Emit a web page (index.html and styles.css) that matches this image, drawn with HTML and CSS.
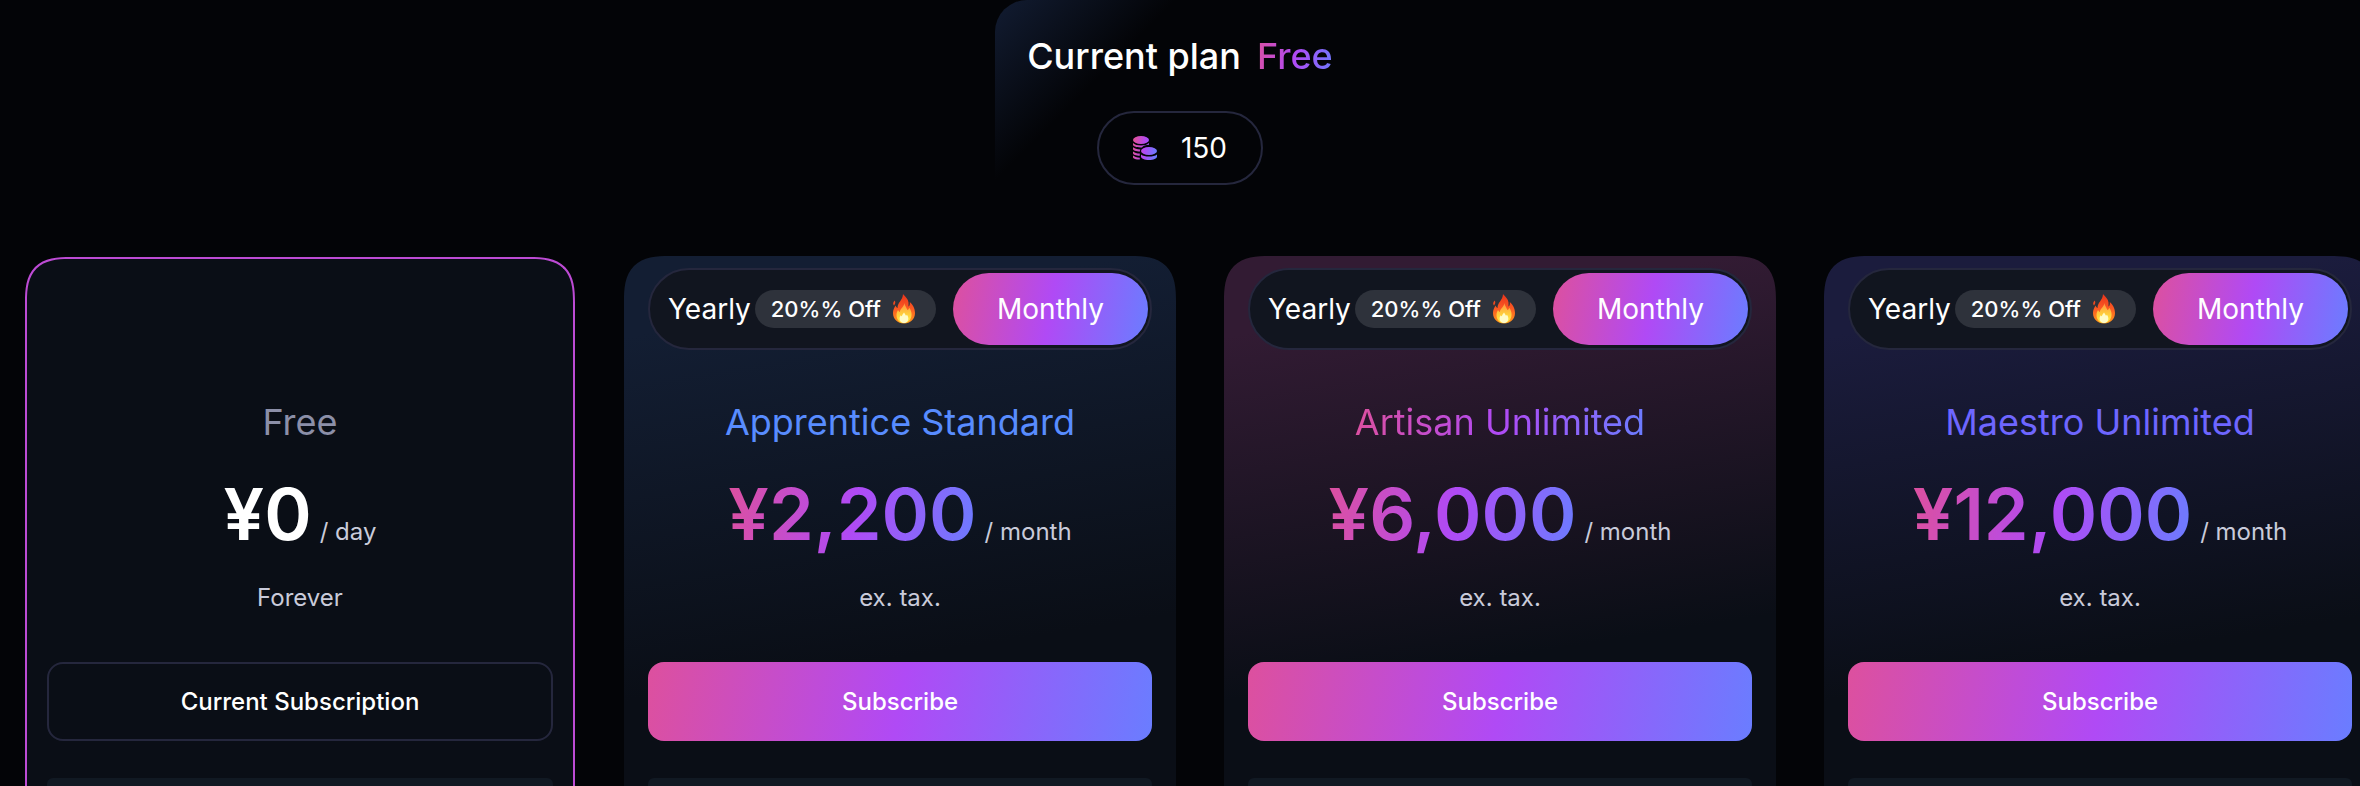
FILE: index.html
```html
<!DOCTYPE html>
<html lang="en">
<head>
<meta charset="utf-8">
<meta name="viewport" content="width=device-width, initial-scale=1">
<title>Plans</title>
<link rel="stylesheet" href="styles.css">
</head>
<body>
<svg class="defs" aria-hidden="true">
  <defs>
    <linearGradient id="brand" gradientUnits="userSpaceOnUse" x1="0" y1="10" x2="24" y2="14">
      <stop offset="0" stop-color="#e0509b"/><stop offset=".5" stop-color="#b04af5"/><stop offset="1" stop-color="#6a7dff"/>
    </linearGradient>
    <linearGradient id="flame-outer" x1="0" y1="0" x2="0" y2="1">
      <stop offset="0" stop-color="#e8331c"/><stop offset=".5" stop-color="#fb5a22"/><stop offset="1" stop-color="#ff9a1f"/>
    </linearGradient>
    <linearGradient id="flame-inner" x1="0" y1="0" x2="0" y2="1">
      <stop offset="0" stop-color="#ff9440"/><stop offset=".5" stop-color="#ffc83c"/><stop offset="1" stop-color="#fff23e"/>
    </linearGradient>
    <symbol id="flame" viewBox="0 0 24 30">
      <path fill="url(#flame-outer)" d="M11 0c2 2.400 5 4.500 5.500 8.500.2 1.600-.1 3 .1 4 .9-.6 1.400-2 1.200-4.500 2.700 2.300 5.200 6.300 5.200 11 0 6.300-4.700 10.500-11 10.500S1 25.300 1 19c0-3.300 1.400-5.700 2.600-7.500.5 1.500 1.200 2.300 2 2.500C5.200 8.500 10.800 6.500 11 0z"/>
      <path fill="#f04a20" d="M2.800 6.500C3.600 8 3.500 9.500 2 11.500.6 10 1 8 2.800 6.500z"/>
      <path fill="url(#flame-inner)" d="M12.500 9c.2 3 2.300 4.800 2.900 7 .9-.3 1.600-1.200 1.800-2.300 1.500 2 2.400 4.300 2.400 6.600 0 5-3.200 8.700-7.600 8.700s-7.500-3.400-7.500-8c0-2 .7-3.600 1.600-5 .4 1.200 1 1.800 1.800 2C8 14.500 12 13 12.500 9z"/>
      <path fill="#fffbc8" d="M12 18.500c1 1.600 1.400 2.300 2 3.200.5-.2.800-.6 1-1 .9 1.300 1.400 2.500 1.400 3.800 0 2.700-1.900 4.500-4.400 4.500s-4.400-1.800-4.400-4.300c0-1.500.5-2.500 1.200-3.400.3.600.7 1 1.100 1 .2-1.500 1.300-2.500 2.100-3.800z"/>
    </symbol>
  </defs>
</svg>

<main class="page">
  <header class="current">
    <h1 class="current-title">Current plan <span class="brand-text">Free</span></h1>
    <div class="credits">
      <svg class="coins" viewBox="0 0 24 24" fill="url(#brand)" aria-hidden="true">
        <ellipse cx="8" cy="4" rx="8" ry="4"/>
        <path d="M0 7c1.500 1.700 4.500 2.500 8 2.500S14.500 8.700 16 7v1.800c-3 .1-5.600.9-7.200 2.600C3.500 11.600 0 10.400 0 8.800z"/>
        <path d="M0 11.200c1.400 1.300 4 2 7.300 2.200-.3.700-.4 1.500-.3 2.200C3 15.400 0 14.400 0 13zM0 15.400c1.400 1.300 4 2 6.800 2.200v2.200C3 19.600 0 18.600 0 17.200zM0 19.600c1.400 1.300 4 2 6.800 2.200V23.600C3 23.400 0 22.600 0 21.200z"/>
        <ellipse cx="16" cy="15" rx="8" ry="4"/>
        <path d="M8 18.500c1.800 1.400 4.700 2 8 2s6.200-.6 8-2v1.900c0 2-3.600 3.600-8 3.600s-8-1.600-8-3.600z"/>
      </svg>
      <span>150</span>
    </div>
  </header>

  <section class="plans" aria-label="Plans">
    <article class="plan plan-free">
      <h2 class="plan-name">Free</h2>
      <p class="price"><strong class="amount">¥0</strong> <span class="period">/ day</span></p>
      <p class="note">Forever</p>
      <button class="action action-current" type="button">Current Subscription</button>
      <div class="features"></div>
    </article>

    <article class="plan plan-apprentice">
      <div class="cycle" role="group" aria-label="Billing cycle">
        <button class="cycle-yearly" type="button" aria-pressed="false">Yearly <span class="discount">20%% Off <svg class="flame" aria-hidden="true"><use href="#flame"/></svg></span></button>
        <button class="cycle-monthly" type="button" aria-pressed="true">Monthly</button>
      </div>
      <h2 class="plan-name">Apprentice Standard</h2>
      <p class="price"><strong class="amount brand-text">¥2,200</strong> <span class="period">/ month</span></p>
      <p class="note">ex. tax.</p>
      <button class="action" type="button">Subscribe</button>
      <div class="features"></div>
    </article>

    <article class="plan plan-artisan">
      <div class="cycle" role="group" aria-label="Billing cycle">
        <button class="cycle-yearly" type="button" aria-pressed="false">Yearly <span class="discount">20%% Off <svg class="flame" aria-hidden="true"><use href="#flame"/></svg></span></button>
        <button class="cycle-monthly" type="button" aria-pressed="true">Monthly</button>
      </div>
      <h2 class="plan-name brand-text">Artisan Unlimited</h2>
      <p class="price"><strong class="amount brand-text">¥6,000</strong> <span class="period">/ month</span></p>
      <p class="note">ex. tax.</p>
      <button class="action" type="button">Subscribe</button>
      <div class="features"></div>
    </article>

    <article class="plan plan-maestro">
      <div class="cycle" role="group" aria-label="Billing cycle">
        <button class="cycle-yearly" type="button" aria-pressed="false">Yearly <span class="discount">20%% Off <svg class="flame" aria-hidden="true"><use href="#flame"/></svg></span></button>
        <button class="cycle-monthly" type="button" aria-pressed="true">Monthly</button>
      </div>
      <h2 class="plan-name">Maestro Unlimited</h2>
      <p class="price"><strong class="amount brand-text">¥12,000</strong> <span class="period">/ month</span></p>
      <p class="note">ex. tax.</p>
      <button class="action" type="button">Subscribe</button>
      <div class="features"></div>
    </article>
  </section>
</main>
</body>
</html>
```
FILE: styles.css
```css
:root {
  --brand: linear-gradient(100deg, #dd509e 0%, #b04af5 50%, #6a7dff 100%);
  --surface: #0a0e16;
  --line: #25273d;
}

* { box-sizing: border-box; }

body {
  margin: 0;
  background: #030407;
  color: #fff;
  font: 400 24px/36px Inter, "Noto Sans", sans-serif;
}

h1, h2, p { margin: 0; }

button {
  margin: 0;
  padding: 0;
  border: 0;
  background: none;
  color: inherit;
  font: inherit;
  cursor: pointer;
}

.defs { position: absolute; width: 0; height: 0; }

.page {
  display: flex;
  flex-direction: column;
  height: 100vh;
  min-height: 786px;
  overflow: hidden;
}

.brand-text {
  background: var(--brand);
  background-clip: text;
  -webkit-background-clip: text;
  color: transparent;
}

.current {
  display: flex;
  flex-direction: column;
  align-items: center;
  align-self: center;
  gap: 24px;
  padding: 26px 32px 71px;
  border-radius: 32px;
  background: linear-gradient(135deg, #121c32 0, transparent 128px);
}

.current-title {
  display: flex;
  gap: 16px;
  font-size: 36px;
  font-weight: 500;
  line-height: 61px;
}

.credits {
  display: flex;
  align-items: center;
  gap: 24px;
  height: 74px;
  padding: 0 34px;
  border: 2px solid var(--line);
  border-radius: 37px;
  font-size: 28px;
}

.coins { width: 24px; height: 24px; }

.plans {
  display: grid;
  flex: 1;
  grid-auto-flow: column;
  grid-auto-columns: 552px;
  gap: 48px;
  padding-left: 24px;
}

.plan {
  display: flex;
  flex-direction: column;
  align-items: center;
  padding: 12px 24px 0;
  border-radius: 32px 32px 0 0;
  background: linear-gradient(171deg, var(--tint, var(--surface)) 80px, var(--surface) 440px);
}

.plan-free {
  margin: 1px 1px 0;
  padding: 91px 20px 0;
  border: 2px solid #bd4bd4;
  border-bottom: 0;
}

.plan-apprentice { --tint: #131e33; }
.plan-artisan { --tint: #321b33; }
.plan-maestro { --tint: #1b1c3d; }

.cycle {
  display: flex;
  align-items: center;
  justify-content: space-between;
  width: 100%;
  height: 82px;
  padding: 0 2px 0 18px;
  border: 2px solid var(--line);
  border-radius: 41px;
  background: #11151f;
  font-size: 28px;
}

.cycle-yearly {
  display: flex;
  align-items: center;
  gap: 4px;
}

.discount {
  display: flex;
  align-items: center;
  gap: 11px;
  height: 38px;
  padding: 0 20px 0 16px;
  border-radius: 19px;
  background: #2e323b;
  font-size: 22px;
  font-weight: 500;
}

.flame { width: 24px; height: 30px; }

.cycle-monthly {
  width: 195px;
  height: 72px;
  border-radius: 36px;
  background: var(--brand);
}

.plan-name {
  margin-top: 50px;
  font-size: 36px;
  font-weight: 400;
  line-height: 44px;
}

.plan-free .plan-name { color: #8c8fa8; }
.plan-apprentice .plan-name { color: #588cff; }
.plan-maestro .plan-name { color: #6e66ff; }

.price {
  display: flex;
  align-items: baseline;
  gap: 8px;
  margin-top: 26px;
}

.amount {
  font-size: 72px;
  font-weight: 600;
  line-height: 88px;
}

.period, .note { color: #c9cbda; }

.note { margin-top: 22px; }

.action {
  width: 100%;
  height: 79px;
  margin-top: 46px;
  border-radius: 16px;
  background: var(--brand);
  font-weight: 500;
}

.action-current {
  border: 2px solid var(--line);
  background: none;
}

.features {
  flex: 1;
  width: 100%;
  margin-top: 37px;
  border-radius: 32px 32px 0 0;
  background: #111923;
}

@supports (corner-shape: superellipse(1.5)) {
  .plan, .features {
    border-radius: 46px 46px 0 0;
    corner-shape: superellipse(1.5);
  }
}
```
